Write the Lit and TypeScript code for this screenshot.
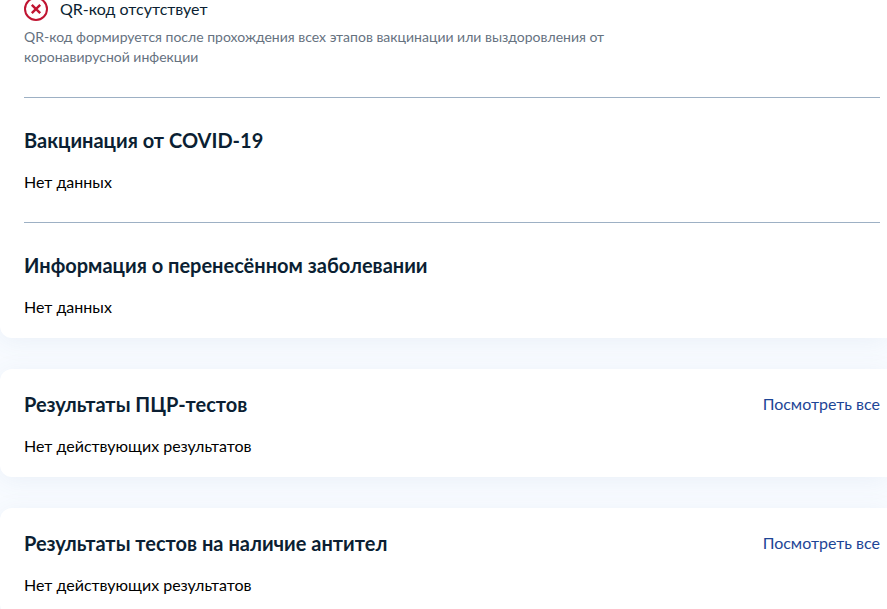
import { LitElement, html, css } from "lit";
import { customElement } from "lit/decorators.js";

@customElement("app-root")
export class AppRoot extends LitElement {
  static styles = css`
    :host {
      display: block;
      min-height: 100vh;
      overflow: hidden;
      background: #f8fbff;
      color: #0b1f33;
      font-family: Lato, "Open Sans", sans-serif;
      font-size: 16px;
      line-height: 24px;
    }
    .page {
      display: flex;
      flex-direction: column;
      gap: 31px;
    }
    .card {
      background: #fff;
      border-radius: 12px 0 0 12px;
      padding: 19px 7px 19px 24px;
      box-shadow: 0 4px 24px rgba(80, 110, 170, 0.08);
    }
    .card.first {
      padding-top: 0;
      border-top-left-radius: 0;
    }
    .status {
      display: flex;
      gap: 12px;
      height: 30px;
      align-items: flex-start;
      margin-top: -3px;
    }
    .icon {
      flex: none;
    }
    h2 {
      margin: 0;
      font-size: 20px;
      line-height: 32px;
      font-weight: 700;
    }
    p {
      margin: 0;
      color: #000;
    }
    .note {
      max-width: 600px;
      margin-bottom: 30px;
      font-size: 14px;
      line-height: 20px;
      color: #66727f;
    }
    .section {
      padding-top: 26px;
      border-top: 1px solid #9db0c4;
    }
    .section + .section {
      margin-top: 28px;
    }
    .body {
      margin-top: 14px;
    }
    .head {
      display: flex;
      justify-content: space-between;
      align-items: center;
    }
    a {
      color: #1d4596;
      text-decoration: none;
    }
  `;

  private results(title: string) {
    return html`<section class="card">
      <div class="head">
        <h2>${title}</h2>
        <a href="#">Посмотреть все</a>
      </div>
      <p class="body">Нет действующих результатов</p>
    </section>`;
  }

  private section(title: string) {
    return html`<section class="section">
      <h2>${title}</h2>
      <p class="body">Нет данных</p>
    </section>`;
  }

  render() {
    return html`<main class="page">
      <div class="card first">
        <div class="status">
          <svg class="icon" width="24" height="24" viewBox="0 0 24 24" fill="none" stroke="#c01532" stroke-width="2" aria-hidden="true">
            <circle cx="12" cy="12" r="11" />
            <path d="M7.8 7.8l8.4 8.4M16.2 7.8l-8.4 8.4" stroke-width="2.4" />
          </svg>
          <span>QR-код отсутствует</span>
        </div>
        <p class="note">
          QR-код формируется после прохождения всех этапов вакцинации или выздоровления от
          коронавирусной инфекции
        </p>
        ${this.section("Вакцинация от COVID-19")}
        ${this.section("Информация о перенесённом заболевании")}
      </div>
      ${this.results("Результаты ПЦР-тестов")}
      ${this.results("Результаты тестов на наличие антител")}
    </main>`;
  }
}
